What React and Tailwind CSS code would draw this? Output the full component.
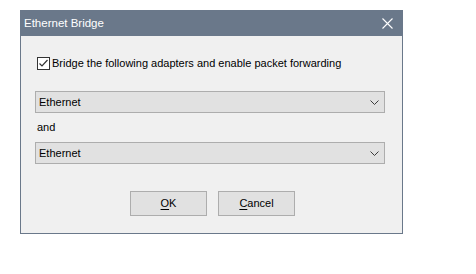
import React from 'react';

// Windows-style "Ethernet Bridge" dialog

const Chevron = () => (
    <svg width="9" height="5" viewBox="0 0 9 5" className="shrink-0">
        <polyline points="0.5,0.5 4.5,4.5 8.5,0.5" fill="none" stroke="#3c3c3c" strokeWidth="1" />
    </svg>
);

const Dropdown = ({ value }) => (
    <div className="h-[22px] w-[350px] flex items-center justify-between border border-[#adadad] bg-[#e1e1e1] pl-[3px] pr-[5px] text-[11px] text-black">
        <span>{value}</span>
        <Chevron />
    </div>
);

const Button = ({ accel, rest }) => (
    <button className="h-[25px] w-[77px] flex items-center justify-center border border-[#adadad] bg-[#e1e1e1] text-[11px] text-black">
        <span><span className="underline underline-offset-2">{accel}</span>{rest}</span>
    </button>
);

const App = () => {
    return (
        <div className="w-[476px] h-[274px] bg-white pt-[10px] pl-[20px]" style={{ fontFamily: '"Liberation Sans", Arial, sans-serif' }}>
            <div className="w-[383px] h-[224px] border border-[#6a788a] bg-[#f0f0f0] flex flex-col">

                {/* TITLE BAR */}
                <div className="h-[25px] bg-[#6a788a] flex items-center justify-between pl-[3px] pr-[9px] shrink-0">
                    <span className="text-white text-[11.5px]">Ethernet Bridge</span>
                    <svg width="11" height="11" viewBox="0 0 11 11">
                        <path d="M0.5 0.5 L10.5 10.5 M10.5 0.5 L0.5 10.5" stroke="#ffffff" strokeWidth="1.1" />
                    </svg>
                </div>

                {/* BODY */}
                <div className="flex flex-col pl-[14px] pt-[21px]">
                    <div className="h-[13px] flex items-center gap-[2px] pl-[2px] text-[11px] leading-[13px] text-black">
                        <div className="w-[13px] h-[13px] border border-[#333333] bg-white flex items-center justify-center">
                            <svg width="11" height="11" viewBox="0 0 11 11">
                                <polyline points="1.5,5.5 4,8 9.5,2" fill="none" stroke="#333333" strokeWidth="1.2" />
                            </svg>
                        </div>
                        <span>Bridge the following adapters and enable packet forwarding</span>
                    </div>

                    <div className="mt-[21px]">
                        <Dropdown value="Ethernet" />
                    </div>
                    <div className="h-[29px] flex items-center pl-[2px] text-[11px] text-black">and</div>
                    <Dropdown value="Ethernet" />

                    <div className="mt-[27px] flex gap-[11px] pl-[95px]">
                        <Button accel="O" rest="K" />
                        <Button accel="C" rest="ancel" />
                    </div>
                </div>
            </div>
        </div>
    );
};

export default App;
